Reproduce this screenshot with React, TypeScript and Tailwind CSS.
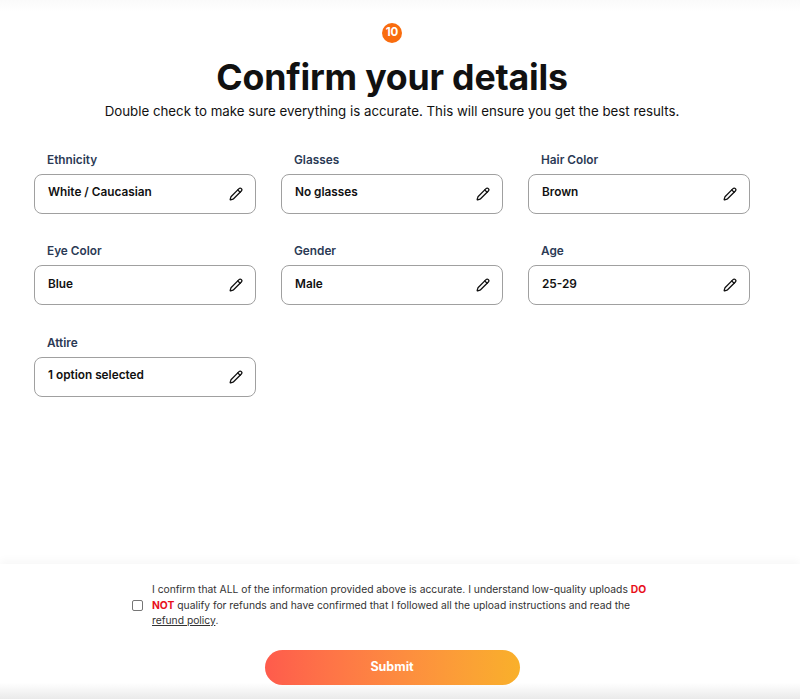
import { Pencil } from "lucide-react";

const fields = [
  { label: "Ethnicity", value: "White / Caucasian" },
  { label: "Glasses", value: "No glasses" },
  { label: "Hair Color", value: "Brown" },
  { label: "Eye Color", value: "Blue" },
  { label: "Gender", value: "Male" },
  { label: "Age", value: "25-29" },
  { label: "Attire", value: "1 option selected" },
];

const Field = ({ label, value }: { label: string; value: string }) => (
  <div className="w-[222px]">
    <div className="mb-[6px] pl-[13px] text-[11.8px] leading-[15px] font-semibold text-[#2b3a55]">{label}</div>
    <div className="flex h-[40px] items-center justify-between rounded-lg border border-[#a0a0a0] pr-[12px] pb-[2px] pl-[13px]">
      <span className="text-[11.8px] font-semibold text-[#111]">{value}</span>
      <Pencil size={14} strokeWidth={2.2} className="mt-[2px] text-[#111]" />
    </div>
  </div>
);

export default function App() {
  return (
    <div className="flex h-[699px] w-[800px] flex-col overflow-hidden bg-white font-['Inter',sans-serif]">
      <div className="flex flex-1 flex-col bg-gradient-to-b from-[#fafafa] to-white to-[12px]">
        <div className="w-[784px]">
          <div className="mx-auto mt-[23px] flex size-[20px] items-center justify-center rounded-full bg-[#f96c0e] text-[11.5px] leading-none font-bold text-white">
            10
          </div>
          <h1 className="mt-[12px] text-center text-[35.7px] leading-[44px] font-bold tracking-[-0.2px] text-[#111]">
            Confirm your details
          </h1>
          <p className="mt-[2px] text-center text-[13.3px] leading-[20px] text-[#111]">
            Double check to make sure everything is accurate. This will ensure you get the best results.
          </p>
        </div>
        <div className="mt-[32px] ml-[34px] grid w-[716px] grid-cols-[222px_222px_222px] gap-x-[25px] gap-y-[30.4px]">
          {fields.map((field) => (
            <Field key={field.label} {...field} />
          ))}
        </div>
      </div>
      <div className="h-[135px] bg-gradient-to-b from-white from-[88%] to-[#eaeaea] shadow-[0_-4px_8px_rgba(0,0,0,0.03)]">
        <div className="mt-[18px] ml-[132px] flex items-center gap-[9px]">
          <input type="checkbox" className="size-[11px] shrink-0 appearance-none rounded-[2px] border border-[#767676] bg-white" />
          <p className="w-[502px] text-[10.3px] leading-[15.5px] text-[#333]">
            I confirm that ALL of the information provided above is accurate. I understand low-quality uploads{" "}
            <b className="font-bold text-[#e8101c]">DO NOT</b> qualify for refunds and have confirmed that I followed
            all the upload instructions and read the <u>refund policy</u>.
          </p>
        </div>
        <div className="w-[784px]">
          <button className="mx-auto mt-[21px] block h-[35px] w-[255px] rounded-full bg-gradient-to-r from-[#fe5b4c] to-[#f9b02a] pt-[1px] text-[12.5px] font-bold text-white">
            Submit
          </button>
        </div>
      </div>
    </div>
  );
}
